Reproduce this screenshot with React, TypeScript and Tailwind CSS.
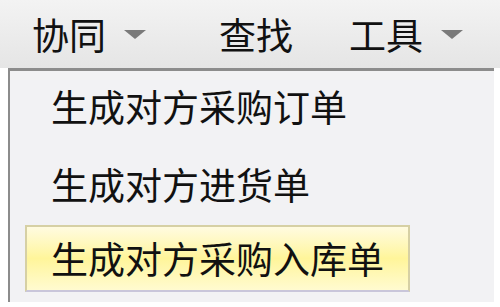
const items = ["生成对方采购订单", "生成对方进货单", "生成对方采购入库单"];

function Arrow() {
  return (
    <svg width="22" height="9" viewBox="0 0 22 9" className="ml-[18px]">
      <polygon points="0,0 22,0 11,9" fill="#7a7a7a" />
    </svg>
  );
}

export default function App() {
  return (
    <div
      className="w-[500px] h-[307px] overflow-hidden bg-white text-[#111]"
      style={{ fontFamily: '"Noto Sans CJK SC", "Noto Sans", sans-serif' }}
    >
      {/* menu bar */}
      <div className="h-[68px] flex items-center bg-gradient-to-b from-[#f3f3f3] to-[#e5e5e5] text-[37px] leading-none">
        <div className="flex items-center ml-[32px] w-[116px]">
          <span>协同</span>
          <Arrow />
        </div>
        <div className="ml-[71px]">
          <span>查找</span>
        </div>
        <div className="flex items-center ml-[56px]">
          <span>工具</span>
          <Arrow />
        </div>
      </div>

      {/* dropdown */}
      <div className="ml-[8px] mr-[6px] h-[234px] border-l-2 border-t-[3px] border-[#8c8c8c] bg-[#f2f2f4] text-[37px] leading-none">
        <div className="flex flex-col pt-[3px]">
          <div className="ml-[15px] h-[64px] flex items-center pl-[26px]">{items[0]}</div>
          <div className="ml-[15px] mt-[8px] h-[76px] flex items-center pl-[26px]">{items[1]}</div>
          <div className="ml-[15px] mt-[3px] w-[385px] h-[67px] flex items-center pl-[24px] border-2 border-[#d6d0a4] border-b-[#c9c6da] bg-gradient-to-b from-[#fffbe0] via-[#fff59a] to-[#fffbd0]">
            {items[2]}
          </div>
        </div>
      </div>
    </div>
  );
}
